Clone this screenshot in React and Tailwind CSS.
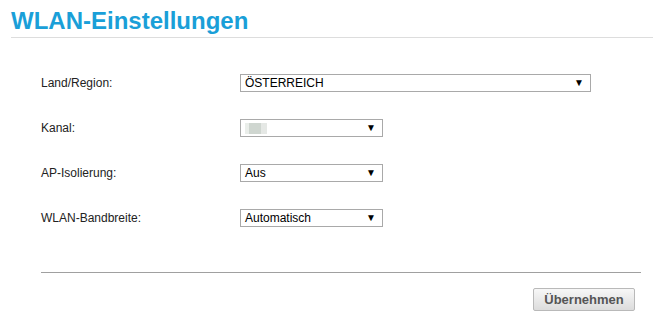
import React from 'react'

const Select = ({ value, width, placeholder }) => (
  <div
    className={`flex items-center justify-between h-[18px] border border-[#a9a9a9] bg-white pl-[4px] pr-[6px] text-[12px] text-black ${width}`}
  >
    {placeholder ? (
      <span className="flex items-center h-[12px]">
        <span className="block w-[4px] h-[11px] bg-[#eaeeea]" />
        <span className="block w-[12px] h-[11px] bg-[#cfd6d0]" />
        <span className="block w-[6px] h-[11px] bg-[#e5e8e5]" />
      </span>
    ) : (
      <span>{value}</span>
    )}
    <span className="text-[10px] leading-none">▼</span>
  </div>
)

const Row = ({ label, children }) => (
  <div className="flex items-center h-[18px]">
    <div className="w-[199px] text-[12px] text-[#222]">{label}</div>
    {children}
  </div>
)

export default function App() {
  return (
    <div className="w-[653px] h-[321px] bg-white font-['Liberation_Sans',Arial,sans-serif] overflow-hidden">
      <div className="ml-[11px] pt-[7px] h-[38px] border-b border-[#dddddd]">
        <h1 className="text-[24px] leading-[28px] font-bold text-[#1a9fd8]">WLAN-Einstellungen</h1>
      </div>

      <div className="pl-[41px] pt-[36px] flex flex-col gap-[27px]">
        <Row label="Land/Region:">
          <Select value="ÖSTERREICH" width="w-[351px]" />
        </Row>
        <Row label="Kanal:">
          <Select placeholder width="w-[143px]" />
        </Row>
        <Row label="AP-Isolierung:">
          <Select value="Aus" width="w-[143px]" />
        </Row>
        <Row label="WLAN-Bandbreite:">
          <Select value="Automatisch" width="w-[143px]" />
        </Row>
      </div>

      <div className="ml-[41px] mr-[12px] mt-[45px] border-t border-[#a0a0a0]" />

      <div className="flex justify-end pr-[18px] pt-[15px]">
        <button className="w-[102px] h-[23px] rounded-[2px] border border-[#b9b9b9] bg-gradient-to-b from-[#f7f7f7] to-[#dcdcdc] text-[13px] font-bold text-[#555]">
          Übernehmen
        </button>
      </div>
    </div>
  )
}
